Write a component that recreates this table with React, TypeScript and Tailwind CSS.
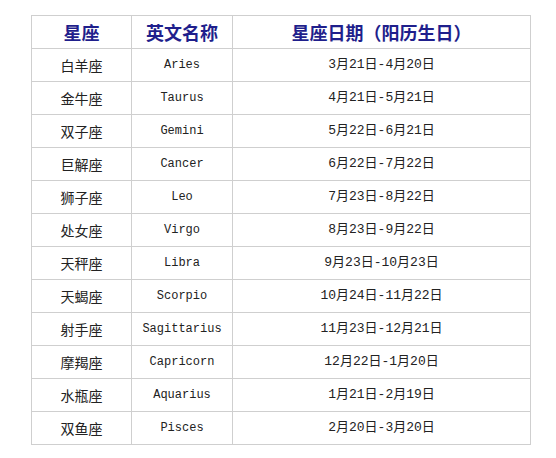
import React from 'react';

const rows: [string, string, string][] = [
  ['白羊座', 'Aries', '3月21日-4月20日'],
  ['金牛座', 'Taurus', '4月21日-5月21日'],
  ['双子座', 'Gemini', '5月22日-6月21日'],
  ['巨解座', 'Cancer', '6月22日-7月22日'],
  ['狮子座', 'Leo', '7月23日-8月22日'],
  ['处女座', 'Virgo', '8月23日-9月22日'],
  ['天秤座', 'Libra', '9月23日-10月23日'],
  ['天蝎座', 'Scorpio', '10月24日-11月22日'],
  ['射手座', 'Sagittarius', '11月23日-12月21日'],
  ['摩羯座', 'Capricorn', '12月22日-1月20日'],
  ['水瓶座', 'Aquarius', '1月21日-2月19日'],
  ['双鱼座', 'Pisces', '2月20日-3月20日'],
];

const cell = 'border border-[#cfcfcf] text-center align-middle p-0';

export default function App() {
  return (
    <div className="w-[556px] h-[458px] bg-white pt-[15px] pl-[31px]">
      <table className="border-collapse table-fixed w-[499px] text-[#222]">
        <colgroup>
          <col className="w-[100px]" />
          <col className="w-[101px]" />
          <col className="w-[298px]" />
        </colgroup>
        <thead>
          <tr className="h-[33px] text-[#1f1f8c] text-[18px] font-bold font-['Noto_Sans_CJK_SC',sans-serif]">
            <th className={cell}>星座</th>
            <th className={cell}>英文名称</th>
            <th className={cell}>星座日期（阳历生日）</th>
          </tr>
        </thead>
        <tbody>
          {rows.map(([cn, en, date]) => (
            <tr key={en} className="h-[33px]">
              <td className={`${cell} text-[14px] font-['Noto_Sans_CJK_SC',sans-serif]`}>{cn}</td>
              <td className={`${cell} text-[12px] font-['Liberation_Mono',monospace]`}>{en}</td>
              <td className={`${cell} text-[13px] font-['Liberation_Mono','Noto_Sans_CJK_SC',monospace]`}>{date}</td>
            </tr>
          ))}
        </tbody>
      </table>
    </div>
  );
}
